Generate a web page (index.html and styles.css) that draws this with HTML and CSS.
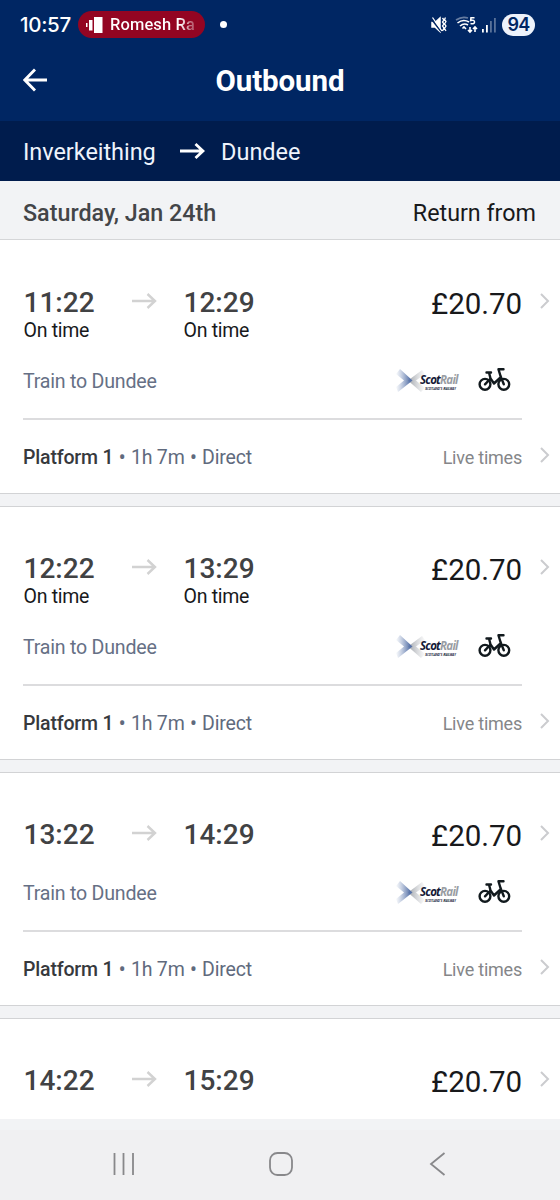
FILE: index.html
```
<!DOCTYPE html>
<html lang="en">
<head>
<meta charset="utf-8">
<title>Outbound</title>
<link rel="stylesheet" href="styles.css">
</head>
<body>
<svg class="defs" width="0" height="0" aria-hidden="true">
  <defs>
    <linearGradient id="blueFade" x1="0" x2="1"><stop offset="0" stop-color="#8ba0c6" stop-opacity=".05"/><stop offset=".85" stop-color="#5873a8"/></linearGradient>
    <linearGradient id="greyFade" x1="0" x2="1"><stop offset="0" stop-color="#9ca0a6"/><stop offset="1" stop-color="#c5c8cc" stop-opacity=".1"/></linearGradient>
    <symbol id="arrow" viewBox="0 0 26 18"><path d="M1 9H24M16.500 2L24 9L16.500 16"/></symbol>
    <symbol id="chevron" viewBox="0 0 10 16"><path d="M1 1L8 8L1 15"/></symbol>
    <symbol id="saltire" viewBox="0 0 30 24">
      <path d="M26 1L29 5L20 11.500L29 19L25 23L12 11.500Z" fill="url(#greyFade)"/>
      <path d="M4 0L16.500 11.500L2 23L0 18L8 11.500L0 5Z" fill="url(#blueFade)"/>
    </symbol>
    <symbol id="bike" viewBox="0 0 34 26">
      <circle cx="7" cy="17.300" r="5.400"/><circle cx="25.800" cy="17.300" r="5.400"/>
      <path d="M7 17.300L12.500 11.500M8.500 5.500H13M11 5.500L12.500 11.500L16 16.500L23 10M25.500 2.300H20.500L22.500 9L25.800 17.300"/>
    </symbol>
  </defs>
</svg>
<header class="top">
  <div class="status">
    <span class="clock">10:57</span>
    <span class="media">
      <svg width="17" height="16" viewBox="0 0 17 16" fill="#fff"><rect x="0" y="6" width="1.500" height="4"/><rect x="3" y="3" width="3.500" height="10.500"/><rect x="8" y="0" width="8.500" height="16"/></svg>
      <span class="media-title">Romesh Ra</span>
    </span>
    <span class="dot"></span>
    <span class="signals">
      <svg width="18" height="18" viewBox="0 0 18 18" fill="none" stroke="#fff" stroke-width="1.500"><path d="M2 6.500H5L10 2V15.500L5 11H2Z" fill="#fff"/><path d="M1 2.500L11 15.500" stroke="#002663" stroke-width="1.500"/><path d="M2.500 1.500L12 15M12.500 2L14 4L12.500 6L14 8L12.500 10L14 12L12.500 15M15.500 1.500L14.500 3.500L16 5.500L14.500 8L16 10L14.500 12.500L16 15" stroke-width="1.300"/></svg>
      <svg class="wifi" width="23" height="18" viewBox="0 0 23 18" fill="none" stroke="#fff" stroke-width="1.600"><path d="M1 4Q7 0 13 2" opacity=".4"/><path d="M2.500 7Q8 2.500 14 6M5 10Q9 6.500 13 9M7.500 12.500L9 11L11 13"/><path d="M15 11V16M13 14L15 16L17 14M20 16V11M18 13L20 11L22 13"/><path d="M19.500 1.700H16L15.700 4.500Q19.500 3.500 19.500 6Q19.500 8.500 15.500 7.500"/></svg>
      <svg width="16" height="16" viewBox="0 0 16 16" fill="#fff"><rect x="1" y="12" width="1.800" height="3.500"/><rect x="5" y="8" width="1.800" height="7.500"/><g opacity=".35"><rect x="9" y="4" width="1.800" height="11.500"/><rect x="13" y="1" width="1.800" height="14.500"/></g></svg>
      <span class="battery">94</span>
    </span>
  </div>
  <div class="title-bar">
    <svg class="back" width="25" height="24" viewBox="0 0 25 24"><path d="M24 12H2M12 1.500L1.800 12L12 22.500"/></svg>
    <h1>Outbound</h1>
  </div>
</header>
<div class="route"><span class="from">Inverkeithing</span><svg class="route-arrow"><use href="#arrow"/></svg><span class="to">Dundee</span></div>
<div class="date-bar"><span class="date">Saturday, Jan 24th</span><span class="return">Return from</span></div>
<main>
  <article class="card">
    <div class="times">
      <div class="stop"><b>11:22</b><span>On time</span></div><svg class="arrow"><use href="#arrow"/></svg>
      <div class="stop"><b>12:29</b><span>On time</span></div><span class="price">£20.70</span><svg class="chevron"><use href="#chevron"/></svg>
    </div>
    <div class="service"><span class="train">Train to Dundee</span><span class="operator"><svg class="saltire"><use href="#saltire"/></svg><span class="brand"><span class="name">Scot<i>Rail</i></span><small>Scotland's Railway</small></span></span><svg class="bike"><use href="#bike"/></svg></div>
    <div class="details"><span class="summary"><b>Platform 1</b> <em>•</em> 1h 7m <em>•</em> Direct</span><span class="live">Live times</span><svg class="chevron"><use href="#chevron"/></svg></div>
  </article>
  <article class="card">
    <div class="times">
      <div class="stop"><b>12:22</b><span>On time</span></div><svg class="arrow"><use href="#arrow"/></svg>
      <div class="stop"><b>13:29</b><span>On time</span></div><span class="price">£20.70</span><svg class="chevron"><use href="#chevron"/></svg>
    </div>
    <div class="service"><span class="train">Train to Dundee</span><span class="operator"><svg class="saltire"><use href="#saltire"/></svg><span class="brand"><span class="name">Scot<i>Rail</i></span><small>Scotland's Railway</small></span></span><svg class="bike"><use href="#bike"/></svg></div>
    <div class="details"><span class="summary"><b>Platform 1</b> <em>•</em> 1h 7m <em>•</em> Direct</span><span class="live">Live times</span><svg class="chevron"><use href="#chevron"/></svg></div>
  </article>
  <article class="card scheduled">
    <div class="times">
      <div class="stop"><b>13:22</b></div><svg class="arrow"><use href="#arrow"/></svg>
      <div class="stop"><b>14:29</b></div><span class="price">£20.70</span><svg class="chevron"><use href="#chevron"/></svg>
    </div>
    <div class="service"><span class="train">Train to Dundee</span><span class="operator"><svg class="saltire"><use href="#saltire"/></svg><span class="brand"><span class="name">Scot<i>Rail</i></span><small>Scotland's Railway</small></span></span><svg class="bike"><use href="#bike"/></svg></div>
    <div class="details"><span class="summary"><b>Platform 1</b> <em>•</em> 1h 7m <em>•</em> Direct</span><span class="live">Live times</span><svg class="chevron"><use href="#chevron"/></svg></div>
  </article>
  <article class="card scheduled last">
    <div class="times">
      <div class="stop"><b>14:22</b></div><svg class="arrow"><use href="#arrow"/></svg>
      <div class="stop"><b>15:29</b></div><span class="price">£20.70</span><svg class="chevron"><use href="#chevron"/></svg>
    </div>
  </article>
</main>
<nav class="system-nav">
  <svg width="24" height="24" viewBox="0 0 24 24"><path d="M2.500 1V23M11.500 1V23M21 1V23"/></svg>
  <svg width="24" height="24" viewBox="0 0 24 24"><rect x="1" y="1" width="22" height="22" rx="7.500"/></svg>
  <svg width="24" height="24" viewBox="0 0 24 24"><path d="M18.500 1L5 12L18.500 23"/></svg>
</nav>
</body>
</html>
```
FILE: styles.css
```
* { box-sizing: border-box; }
body { margin: 0; width: 560px; height: 1200px; overflow: hidden; display: flex; flex-direction: column; background: #f2f3f5; font-family: Roboto, sans-serif; color: #18191b; }
svg { flex: none; }
.defs { display: block; height: 0; }
.top { height: 121px; flex: none; background: #002663; color: #fff; }
.status { height: 49px; padding-left: 20px; display: flex; align-items: center; }
.clock { width: 58px; font: 500 20.500px/24px Inter, sans-serif; letter-spacing: -.3px; }
.media { width: 127px; height: 27px; border-radius: 14px; background: #930522; display: flex; align-items: center; padding-left: 8px; gap: 7px; }
.media-title { font-size: 16.500px; font-weight: 500; letter-spacing: .1px; white-space: nowrap; background: linear-gradient(90deg, #fff 82%, #930522 106%); background-clip: text; color: transparent; }
.dot { width: 7px; height: 7px; border-radius: 50%; background: #fff; margin-left: 15px; }
.signals { display: flex; align-items: center; margin-left: auto; padding-right: 25px; }
.wifi { margin: 0 3px 0 7px; }
.battery { width: 33px; height: 22px; margin-left: 5px; border-radius: 11px; background: #edf2fb; color: #002663; font: 600 18px/22px Inter, sans-serif; letter-spacing: -.8px; text-align: center; }
.title-bar { height: 64px; padding: 0 23px; display: grid; grid-template-columns: 30px 1fr 30px; align-items: center; }
.back { fill: none; stroke: #fff; stroke-width: 2.800; margin-bottom: 3px; }
h1 { margin: 0; font-size: 29.500px; font-weight: 700; text-align: center; line-height: 36px; letter-spacing: -.1px; }
.route { height: 60px; flex: none; background: #001c4d; color: #eef3fc; display: flex; align-items: center; padding: 2px 23px 0; font-size: 23.500px; }
.from { width: 156px; letter-spacing: -.05px; }
.route-arrow { width: 26px; height: 18px; fill: none; stroke: #fff; stroke-width: 2.800; margin: 0 16px 2px 0; }
.date-bar { height: 59px; flex: none; padding: 5px 24px 0 23px; display: flex; align-items: center; justify-content: space-between; border-bottom: 1px solid #d5d6d8; font-size: 23.300px; }
.date { font-weight: 500; color: #434548; }
main { height: 879px; flex: none; overflow: hidden; display: flex; flex-direction: column; gap: 12px; }
.card { height: 254px; flex: none; background: #fff; border-bottom: 1px solid #d2d3d5; padding: 44px 10px 0 23px; }
.card + .card { border-top: 1px solid #d2d3d5; padding-top: 43px; }
.card.scheduled { height: 234px; }
.card.last { height: 101px; border-bottom: 0; }
.times { display: flex; height: 79px; align-items: flex-start; }
.scheduled .times { height: 59px; }
.stop { width: 108px; display: flex; flex-direction: column; padding-left: .5px; }
.arrow + .stop { width: 120px; }
.stop b { font-size: 28px; line-height: 38px; font-weight: 500; color: #414244; }
.stop span { font-size: 19.500px; line-height: 18px; letter-spacing: -.28px; }
.arrow { width: 26px; height: 18px; margin: 8px 26px 0 0; fill: none; stroke: #d2d2d2; stroke-width: 2.400; }
.price { margin-left: auto; font-size: 29.500px; line-height: 40px; letter-spacing: -.05px; }
.chevron { width: 10px; height: 16px; margin-left: 17px; fill: none; stroke: #cbcccf; stroke-width: 2; }
.price + .chevron { margin: 9px 0 0 18px; }
.service { height: 57px; margin-right: 28px; border-bottom: 2px solid #dcdcde; display: flex; align-items: flex-start; }
.train { font-size: 19.600px; line-height: 37px; letter-spacing: -.22px; color: #667085; }
.operator { margin-left: auto; display: flex; align-items: center; height: 36px; }
.saltire { width: 30px; height: 24px; }
.brand { width: 42px; margin: 2px 0 0 -6px; display: flex; flex-direction: column; white-space: nowrap; }
.name { font: italic 700 11.500px/12px "Open Sans", sans-serif; color: #151a38; letter-spacing: -.75px; }
.name i { color: #999da3; }
.brand small { margin-left: 5px; font: italic 700 4.200px/5px "Open Sans", sans-serif; letter-spacing: -.1px; font-variant: small-caps; color: #222740; }
.bike { width: 34px; height: 26px; margin: 4px 10px 0 16px; fill: none; stroke: #11191d; stroke-width: 2.400; stroke-linejoin: round; stroke-linecap: round; }
.details { height: 74px; display: flex; align-items: center; }
.details .chevron { margin: 0 0 4px 18px; }
.summary { font-size: 19.500px; letter-spacing: -.18px; color: #606a7d; white-space: nowrap; }
.summary b { font-weight: 500; color: #37393d; }
.summary em { font: 19.500px/20px "Open Sans", sans-serif; margin: 0 .5px; }
.live { margin-left: auto; color: #858689; font-size: 18px; letter-spacing: -.22px; }
.system-nav { height: 81px; flex: none; border-top: 11px solid #f2f3f5; background: #f0f0f2; display: grid; grid-template-columns: repeat(3, 157px); justify-content: center; justify-items: center; align-items: center; padding-left: 2px; }
.system-nav svg { fill: none; stroke: #88888b; stroke-width: 1.800; margin-bottom: 2px; }
```
